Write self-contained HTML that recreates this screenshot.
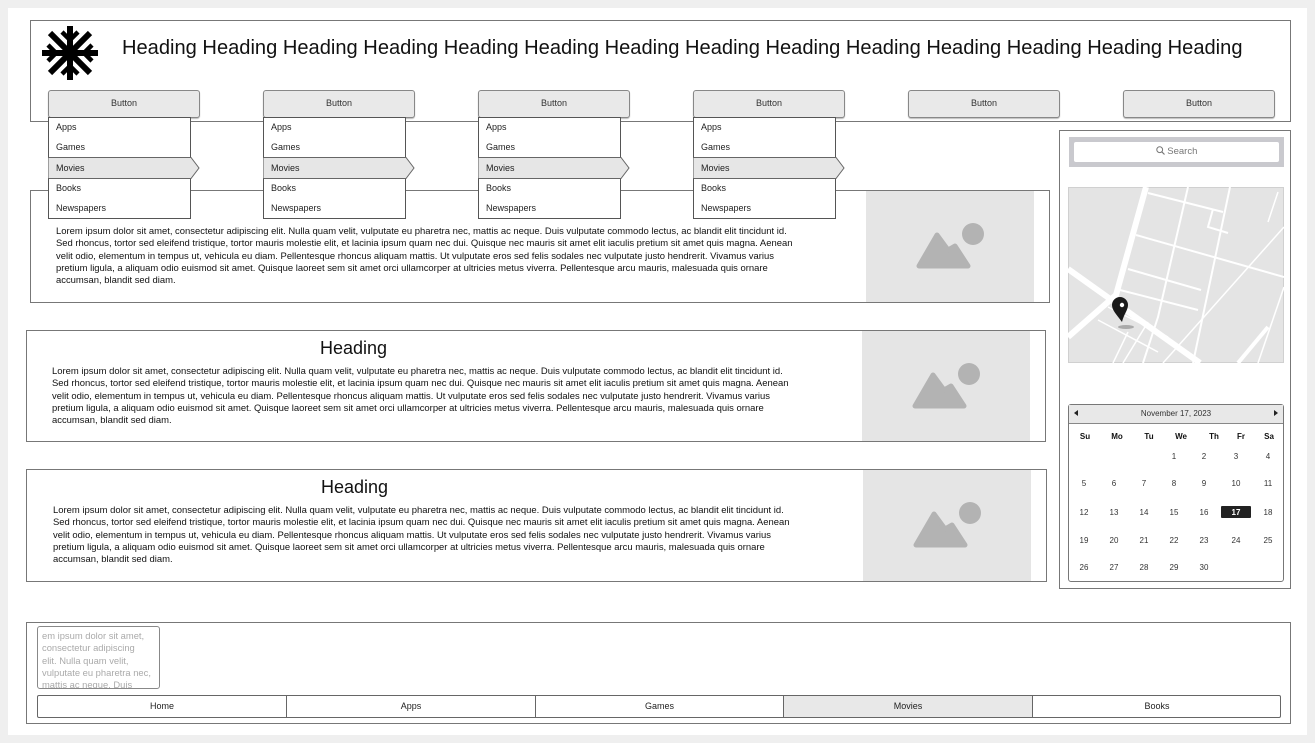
<!DOCTYPE html>
<html><head><meta charset="utf-8"><style>
*{margin:0;padding:0;box-sizing:border-box}
body{width:1315px;height:743px;background:#efefef;font-family:"Liberation Sans",Arial,sans-serif;color:#222;position:relative;overflow:hidden}
.abs{position:absolute}
.page{left:8px;top:8px;width:1299px;height:727px;background:#fff}
.box{position:absolute;border:1px solid #777;background:#fff}
.btn{position:absolute;top:90px;width:152px;height:28px;background:#e9e9e9;border:1px solid #888;border-radius:3px;font-size:9px;text-align:center;line-height:24px;color:#333;box-shadow:0 1px 1px #bbb}
.dd{position:absolute;top:117px;width:143px;height:102px;border:1px solid #555;background:#fff;font-size:9px}
.dd div{position:absolute;left:7px}
.mv{position:absolute;left:-1px;top:39px;width:155px;height:22px}
.txt{position:absolute;font-size:9.45px;line-height:12.3px;white-space:nowrap;color:#111}
.img{position:absolute;background:#e5e5e5}
.h2{position:absolute;font-size:18px;color:#111}
.cal{font-size:8px;color:#333}
.cal span{position:absolute;transform:translateX(-50%)}
.tab{position:absolute;top:0;height:22px;font-size:9px;text-align:center;line-height:21px;border-right:1px solid #666}
</style></head><body>
<div class="abs page"></div>

<!-- header -->
<div class="box" style="left:30px;top:20px;width:1261px;height:102px"></div>
<svg class="abs" style="left:40px;top:24px" width="60" height="58" viewBox="0 0 60 58">
<g stroke="#000" stroke-width="6" fill="none">
<line x1="30" y1="2" x2="30" y2="56"/><line x1="2" y1="29" x2="58" y2="29"/>
<line x1="10" y1="9" x2="50" y2="49"/><line x1="50" y1="9" x2="10" y2="49"/>
</g>
<g stroke="#000" stroke-width="4.5" fill="none">
<polyline points="22,8 30,16 38,8"/><polyline points="22,50 30,42 38,50"/>
<polyline points="8,21 16,29 8,37"/><polyline points="52,21 44,29 52,37"/>
</g></svg>
<div class="abs" style="left:122px;top:37px;font-size:20.1px;color:#111;white-space:nowrap">Heading Heading Heading Heading Heading Heading Heading Heading Heading Heading Heading Heading Heading Heading</div>

<!-- card1 -->
<div class="box" style="left:30px;top:190px;width:1020px;height:113px"></div>
<div class="img" style="left:866px;top:191px;width:168px;height:111px"></div>
<div class="txt" style="left:56px;top:226px">Lorem ipsum dolor sit amet, consectetur adipiscing elit. Nulla quam velit, vulputate eu pharetra nec, mattis ac neque. Duis vulputate commodo lectus, ac blandit elit tincidunt id.<br>Sed rhoncus, tortor sed eleifend tristique, tortor mauris molestie elit, et lacinia ipsum quam nec dui. Quisque nec mauris sit amet elit iaculis pretium sit amet quis magna. Aenean<br>velit odio, elementum in tempus ut, vehicula eu diam. Pellentesque rhoncus aliquam mattis. Ut vulputate eros sed felis sodales nec vulputate justo hendrerit. Vivamus varius<br>pretium ligula, a aliquam odio euismod sit amet. Quisque laoreet sem sit amet orci ullamcorper at ultricies metus viverra. Pellentesque arcu mauris, malesuada quis ornare<br>accumsan, blandit sed diam.</div>

<!-- card2 -->
<div class="box" style="left:26px;top:330px;width:1020px;height:112px"></div>
<div class="img" style="left:862px;top:331px;width:168px;height:110px"></div>
<div class="h2" style="left:320px;top:338px">Heading</div>
<div class="txt" style="left:52px;top:366px">Lorem ipsum dolor sit amet, consectetur adipiscing elit. Nulla quam velit, vulputate eu pharetra nec, mattis ac neque. Duis vulputate commodo lectus, ac blandit elit tincidunt id.<br>Sed rhoncus, tortor sed eleifend tristique, tortor mauris molestie elit, et lacinia ipsum quam nec dui. Quisque nec mauris sit amet elit iaculis pretium sit amet quis magna. Aenean<br>velit odio, elementum in tempus ut, vehicula eu diam. Pellentesque rhoncus aliquam mattis. Ut vulputate eros sed felis sodales nec vulputate justo hendrerit. Vivamus varius<br>pretium ligula, a aliquam odio euismod sit amet. Quisque laoreet sem sit amet orci ullamcorper at ultricies metus viverra. Pellentesque arcu mauris, malesuada quis ornare<br>accumsan, blandit sed diam.</div>

<!-- card3 -->
<div class="box" style="left:26px;top:469px;width:1021px;height:113px"></div>
<div class="img" style="left:863px;top:470px;width:168px;height:111px"></div>
<div class="h2" style="left:321px;top:477px">Heading</div>
<div class="txt" style="left:53px;top:505px">Lorem ipsum dolor sit amet, consectetur adipiscing elit. Nulla quam velit, vulputate eu pharetra nec, mattis ac neque. Duis vulputate commodo lectus, ac blandit elit tincidunt id.<br>Sed rhoncus, tortor sed eleifend tristique, tortor mauris molestie elit, et lacinia ipsum quam nec dui. Quisque nec mauris sit amet elit iaculis pretium sit amet quis magna. Aenean<br>velit odio, elementum in tempus ut, vehicula eu diam. Pellentesque rhoncus aliquam mattis. Ut vulputate eros sed felis sodales nec vulputate justo hendrerit. Vivamus varius<br>pretium ligula, a aliquam odio euismod sit amet. Quisque laoreet sem sit amet orci ullamcorper at ultricies metus viverra. Pellentesque arcu mauris, malesuada quis ornare<br>accumsan, blandit sed diam.</div>

<!-- image icons -->
<svg class="abs" style="left:0;top:0" width="1315" height="743">
<defs><g id="ic" fill="#b3b3b3"><path d="M3,36 L21,5 L32,20 L39,16 L52,36 Z" stroke="#b3b3b3" stroke-width="5" stroke-linejoin="round"/><circle cx="57" cy="4" r="11"/></g></defs>
<use href="#ic" x="916" y="230"/>
<use href="#ic" x="912" y="370"/>
<use href="#ic" x="913" y="509"/>
</svg>

<!-- buttons -->
<div class="btn" style="left:48px">Button</div>
<div class="btn" style="left:263px">Button</div>
<div class="btn" style="left:478px">Button</div>
<div class="btn" style="left:693px">Button</div>
<div class="btn" style="left:908px">Button</div>
<div class="btn" style="left:1123px">Button</div>

<!-- dropdowns -->
<div class="dd" style="left:48px"><svg class="mv" width="155" height="22"><path d="M0.5,0.5 H143 L151,11 L143,21.5 H0.5" fill="#e6e6e6" stroke="#666"/></svg><div style="top:4px">Apps</div><div style="top:24px">Games</div><div style="top:45px">Movies</div><div style="top:65px">Books</div><div style="top:85px">Newspapers</div></div>
<div class="dd" style="left:263px"><svg class="mv" width="155" height="22"><path d="M0.5,0.5 H143 L151,11 L143,21.5 H0.5" fill="#e6e6e6" stroke="#666"/></svg><div style="top:4px">Apps</div><div style="top:24px">Games</div><div style="top:45px">Movies</div><div style="top:65px">Books</div><div style="top:85px">Newspapers</div></div>
<div class="dd" style="left:478px"><svg class="mv" width="155" height="22"><path d="M0.5,0.5 H143 L151,11 L143,21.5 H0.5" fill="#e6e6e6" stroke="#666"/></svg><div style="top:4px">Apps</div><div style="top:24px">Games</div><div style="top:45px">Movies</div><div style="top:65px">Books</div><div style="top:85px">Newspapers</div></div>
<div class="dd" style="left:693px"><svg class="mv" width="155" height="22"><path d="M0.5,0.5 H143 L151,11 L143,21.5 H0.5" fill="#e6e6e6" stroke="#666"/></svg><div style="top:4px">Apps</div><div style="top:24px">Games</div><div style="top:45px">Movies</div><div style="top:65px">Books</div><div style="top:85px">Newspapers</div></div>

<!-- sidebar -->
<div class="box" style="left:1059px;top:130px;width:232px;height:459px"></div>
<div class="abs" style="left:1069px;top:137px;width:215px;height:30px;background:#c9c9ce"></div>
<div class="abs" style="left:1074px;top:142px;width:205px;height:20px;background:#fff;border-radius:2px;font-size:9.5px;color:#777;text-align:center;line-height:20px">
<svg width="9" height="9" viewBox="0 0 9 9" style="vertical-align:-1px"><circle cx="3.7" cy="3.7" r="2.9" fill="none" stroke="#777" stroke-width="1"/><line x1="5.8" y1="5.8" x2="8.5" y2="8.5" stroke="#777" stroke-width="1.2"/></svg> Search</div>

<svg class="abs" style="left:1068px;top:187px" width="216" height="176" viewBox="0 0 216 176">
<rect x="0.5" y="0.5" width="215" height="175" fill="#e4e4e4" stroke="#d0d0d0"/>
<g stroke="#fff" fill="none">
<path d="M78,0 L48,108 L0,150" stroke-width="6"/>
<path d="M0,82 L132,176" stroke-width="6"/>
<path d="M200,140 L170,176" stroke-width="4"/>
<path d="M80,6 L155,25" stroke-width="2"/>
<path d="M120,0 L90,130 L75,176" stroke-width="2"/>
<path d="M162,0 L125,176" stroke-width="2"/>
<path d="M145,22 L140,40 L160,46" stroke-width="2"/>
<path d="M68,48 L216,90" stroke-width="2"/>
<path d="M60,82 L133,103" stroke-width="2"/>
<path d="M52,103 L130,123" stroke-width="2"/>
<path d="M216,40 L95,176" stroke-width="1.5"/>
<path d="M210,5 L200,35" stroke-width="1.5"/>
<path d="M40,120 L100,150" stroke-width="1.5"/>
<path d="M30,133 L90,165" stroke-width="1.5"/>
<path d="M80,135 L55,176" stroke-width="1.5"/>
<path d="M60,145 L45,176" stroke-width="1.5"/>
<path d="M216,100 L190,176" stroke-width="1.5"/>
</g>
<ellipse cx="58" cy="140" rx="8" ry="2" fill="#aaa"/>
<path d="M56,138 C50,130 46,126 46,121 A8,8 0 0 1 62,121 C62,126 58,130 56,138 Z" fill="#1a1a1a" transform="translate(-2,-3)"/>
<circle cx="54" cy="118" r="2.2" fill="#fff"/>
</svg>

<!-- calendar -->
<div class="abs" style="left:1068px;top:404px;width:216px;height:178px;border:1px solid #777;border-radius:3px;background:#fff"></div>
<div class="abs" style="left:1069px;top:405px;width:214px;height:19px;background:#e8e8e8;border-bottom:1px solid #888;font-size:8px;color:#333;text-align:center;line-height:18px">November 17, 2023</div>
<div class="abs" style="left:1074px;top:410px;width:0;height:0;border-top:3px solid transparent;border-bottom:3px solid transparent;border-right:4px solid #222"></div>
<div class="abs" style="left:1274px;top:410px;width:0;height:0;border-top:3px solid transparent;border-bottom:3px solid transparent;border-left:4px solid #222"></div>
<div class="abs" style="left:1221px;top:506px;width:30px;height:12px;background:#222;border-radius:1px"></div>
<div class="abs cal" style="left:0;top:0;width:1315px;height:743px">
<div style="font-weight:bold;color:#111">
<span style="left:1085px;top:432px">Su</span><span style="left:1117px;top:432px">Mo</span><span style="left:1149px;top:432px">Tu</span><span style="left:1181px;top:432px">We</span><span style="left:1214px;top:432px">Th</span><span style="left:1241px;top:432px">Fr</span><span style="left:1269px;top:432px">Sa</span></div>
<span style="left:1174px;top:452px">1</span><span style="left:1204px;top:452px">2</span><span style="left:1236px;top:452px">3</span><span style="left:1268px;top:452px">4</span>
<span style="left:1084px;top:479px">5</span><span style="left:1114px;top:479px">6</span><span style="left:1144px;top:479px">7</span><span style="left:1174px;top:479px">8</span><span style="left:1204px;top:479px">9</span><span style="left:1236px;top:479px">10</span><span style="left:1268px;top:479px">11</span>
<span style="left:1084px;top:508px">12</span><span style="left:1114px;top:508px">13</span><span style="left:1144px;top:508px">14</span><span style="left:1174px;top:508px">15</span><span style="left:1204px;top:508px">16</span><span style="left:1236px;top:508px;color:#fff;font-weight:bold">17</span><span style="left:1268px;top:508px">18</span>
<span style="left:1084px;top:536px">19</span><span style="left:1114px;top:536px">20</span><span style="left:1144px;top:536px">21</span><span style="left:1174px;top:536px">22</span><span style="left:1204px;top:536px">23</span><span style="left:1236px;top:536px">24</span><span style="left:1268px;top:536px">25</span>
<span style="left:1084px;top:563px">26</span><span style="left:1114px;top:563px">27</span><span style="left:1144px;top:563px">28</span><span style="left:1174px;top:563px">29</span><span style="left:1204px;top:563px">30</span>
</div>

<!-- footer -->
<div class="box" style="left:26px;top:622px;width:1265px;height:102px"></div>
<div class="abs" style="left:37px;top:626px;width:123px;height:63px;border:1px solid #888;border-radius:3px;overflow:hidden;font-size:9.4px;line-height:12.3px;color:#aaa;padding:3px 4px;white-space:nowrap">em ipsum dolor sit amet,<br>consectetur adipiscing<br>elit. Nulla quam velit,<br>vulputate eu pharetra nec,<br>mattis ac neque. Duis</div>
<div class="abs" style="left:37px;top:695px;width:1244px;height:23px;border:1px solid #666;border-radius:2px;overflow:hidden">
<div class="tab" style="left:0;width:249px">Home</div>
<div class="tab" style="left:249px;width:249px">Apps</div>
<div class="tab" style="left:498px;width:248px">Games</div>
<div class="tab" style="left:746px;width:249px;background:#e8e8e8">Movies</div>
<div class="tab" style="left:995px;width:248px;border-right:none">Books</div>
</div>
</body></html>
